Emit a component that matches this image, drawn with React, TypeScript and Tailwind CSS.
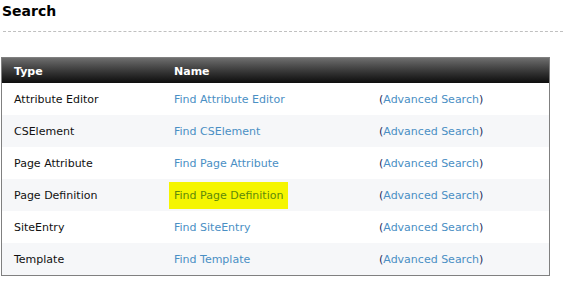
const rows = [
  { type: "Attribute Editor", name: "Find Attribute Editor" },
  { type: "CSElement", name: "Find CSElement" },
  { type: "Page Attribute", name: "Find Page Attribute" },
  { type: "Page Definition", name: "Find Page Definition", active: true },
  { type: "SiteEntry", name: "Find SiteEntry" },
  { type: "Template", name: "Find Template" },
];

export default function App() {
  return (
    <div
      className="w-[563px] h-[303px] bg-white text-[11px] text-[#111]"
      style={{ fontFamily: '"DejaVu Sans", Verdana, sans-serif' }}
    >
      <h1 className="pl-[2px] pt-[2px] text-[14px] font-bold leading-[18px] text-black">Search</h1>
      <div className="mt-[11px] ml-[3px] h-0 border-t border-dashed border-[#c0c0c0]" />
      <div className="mt-[25px] ml-[1px] w-[549px] border border-[#808080]">
        <div className="h-[25px] pt-[3px] grid grid-cols-[160px_204px_1fr] items-center bg-gradient-to-b from-[#6e6e6e] to-[#0e0e0e] text-white font-bold">
          <div className="pl-[12px]">Type</div>
          <div className="pl-[12px]">Name</div>
          <div />
        </div>
        {rows.map((r, i) => (
          <div
            key={r.type}
            className={
              "h-[32px] pt-[3px] grid grid-cols-[160px_204px_1fr] items-center " +
              (i % 2 === 1 ? "bg-[#f6f7f9]" : "bg-white")
            }
          >
            <div className="pl-[12px]">{r.type}</div>
            <div className="pl-[12px]">
              {r.active ? (
                <span className="-ml-[5px] px-[5px] py-[7px] bg-[#f5f500] text-[#5f8a0a]">{r.name}</span>
              ) : (
                <span className="text-[#4a8fc4]">{r.name}</span>
              )}
            </div>
            <div className="pl-[13px] text-[#1a2a5a]">
              (<span className="text-[#4a8fc4]">Advanced Search</span>)
            </div>
          </div>
        ))}
      </div>
    </div>
  );
}
